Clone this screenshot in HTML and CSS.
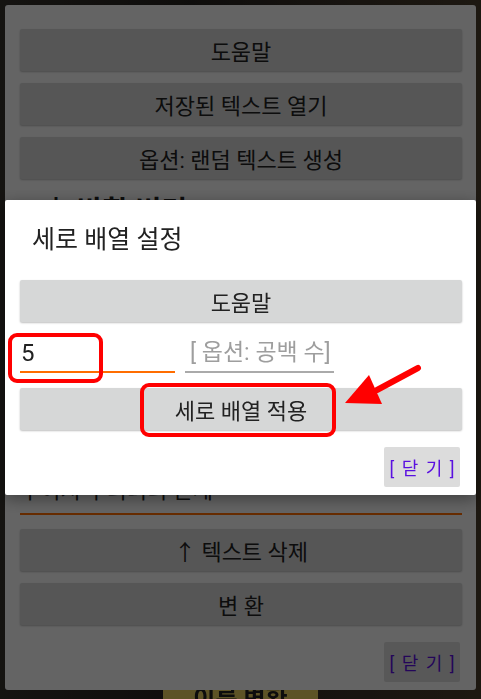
FILE: index.html
```html
<!DOCTYPE html>
<html>

<head>
    <title>세로 배열 설정</title>
    <link rel="stylesheet" href="styles.css">
</head>

<body>
    <div class="photo">
        <div class="photo-button">이름 변환</div>
    </div>

    <!-- dialog underneath -->
    <div class="sheet">
        <button class="btn">도움말</button>
        <button class="btn">저장된 텍스트 열기</button>
        <button class="btn">옵션: 랜덤 텍스트 생성</button>
        <h2 class="sheet-heading">↓ 방향 변경</h2>
        <div class="sheet-hidden"></div>
        <div class="sheet-text">우이지 우리더리 단계</div>
        <button class="btn">↑ 텍스트 삭제</button>
        <button class="btn">변 환</button>
        <div class="close-row">
            <button class="close">[ 닫 기 ]</button>
        </div>
    </div>

    <div class="scrim"></div>

    <!-- active dialog -->
    <div class="dialog">
        <h1 class="dialog-title">세로 배열 설정</h1>
        <button class="btn">도움말</button>
        <div class="fields">
            <div class="field field-active">5</div>
            <div class="field field-hint">[ 옵션: 공백 수]</div>
        </div>
        <button class="btn">세로 배열 적용</button>
        <div class="close-row">
            <button class="close">[ 닫 기 ]</button>
        </div>

        <div class="mark mark-input"></div>
        <div class="mark mark-apply"></div>
        <svg class="arrow" width="100" height="60" viewBox="0 0 100 60">
            <line x1="86" y1="8" x2="45" y2="30" stroke="#ff0000" stroke-width="6" stroke-linecap="round" />
            <polygon points="13,43 37,15 50,44" fill="#ff0000" />
        </svg>
    </div>
</body>

</html>
```

FILE: styles.css
```css
/* General Styles */
* {
    box-sizing: border-box;
}

body {
    margin: 0;
    height: 699px;
    overflow: hidden;
    background: #2a2622;
    font-family: Roboto, "Noto Sans CJK KR", sans-serif;
    color: #222;
}

/* Photo behind everything */
.photo {
    position: fixed;
    inset: 0;
    background: linear-gradient(90deg, #36322c 0%, #25221f 40%, #3a3128 70%, #4a3d2c 100%);
}

.photo-button {
    position: absolute;
    left: 163px;
    top: 683px;
    width: 155px;
    height: 40px;
    background: #e8d060;
    border-radius: 3px;
    text-align: center;
    font-size: 24px;
    font-weight: bold;
    line-height: 32px;
    overflow: hidden;
}

/* Buttons */
.btn {
    display: block;
    width: 100%;
    height: 42px;
    border: none;
    border-radius: 2px;
    background: #d6d7d7;
    box-shadow: 0 1px 2px rgba(0, 0, 0, 0.25);
    font-family: inherit;
    font-size: 22px;
    color: #222;
    padding: 0;
}

.close-row {
    display: flex;
    justify-content: flex-end;
    padding-right: 2px;
}

.close {
    width: 76px;
    height: 40px;
    border: none;
    border-radius: 2px;
    background: #dcdcdc;
    font-family: inherit;
    font-size: 18px;
    color: #5a10e0;
    padding: 0;
    word-spacing: 3px;
}

/* Dialog underneath */
.sheet {
    position: relative;
    margin: 5px;
    height: 685px;
    background: #fafafa;
    border-radius: 3px;
    padding: 24px 14px 0 15px;
    display: flex;
    flex-direction: column;
    gap: 12px;
}

.sheet-heading {
    margin: 4px 0 0 22px;
    font-size: 28px;
    line-height: 34px;
}

.sheet-hidden {
    height: 240px;
}

.sheet-text {
    height: 32px;
    margin: -10px 0 2px;
    font-size: 22px;
    line-height: 16px;
    border-bottom: 2px solid #ff6d00;
    overflow: hidden;
}

.sheet .close-row {
    margin-top: 5px;
}

.scrim {
    position: fixed;
    inset: 0;
    background: rgba(0, 0, 0, 0.6);
}

/* Active dialog */
.dialog {
    position: fixed;
    left: 5px;
    right: 5px;
    top: 200px;
    height: 295px;
    background: #fff;
    border-radius: 2px;
    box-shadow: 0 4px 16px rgba(0, 0, 0, 0.4);
    padding: 0 14px 0 15px;
    display: flex;
    flex-direction: column;
}

.dialog-title {
    margin: 22px 0 22px 12px;
    font-size: 25px;
    font-weight: normal;
    line-height: 36px;
}

.fields {
    display: flex;
    gap: 10px;
    margin: 13px 0 15px;
}

.field {
    height: 38px;
    font-size: 23px;
    line-height: 36px;
    border-bottom: 2px solid #aaa;
    white-space: nowrap;
}

.field-active {
    width: 155px;
    padding-left: 1px;
    font-size: 24px;
    border-bottom-color: #ff6d00;
}

.field-hint {
    width: 149px;
    color: #9e9e9e;
    padding-left: 5px;
}

.dialog .close-row {
    margin-top: 17px;
}

/* Red annotations */
.mark {
    position: absolute;
    border: 4px solid #ff0000;
    border-radius: 9px;
}

.mark-input {
    left: 3px;
    top: 133px;
    width: 95px;
    height: 50px;
}

.mark-apply {
    left: 135px;
    top: 183px;
    width: 196px;
    height: 54px;
}

.arrow {
    position: absolute;
    left: 327px;
    top: 160px;
}
```
